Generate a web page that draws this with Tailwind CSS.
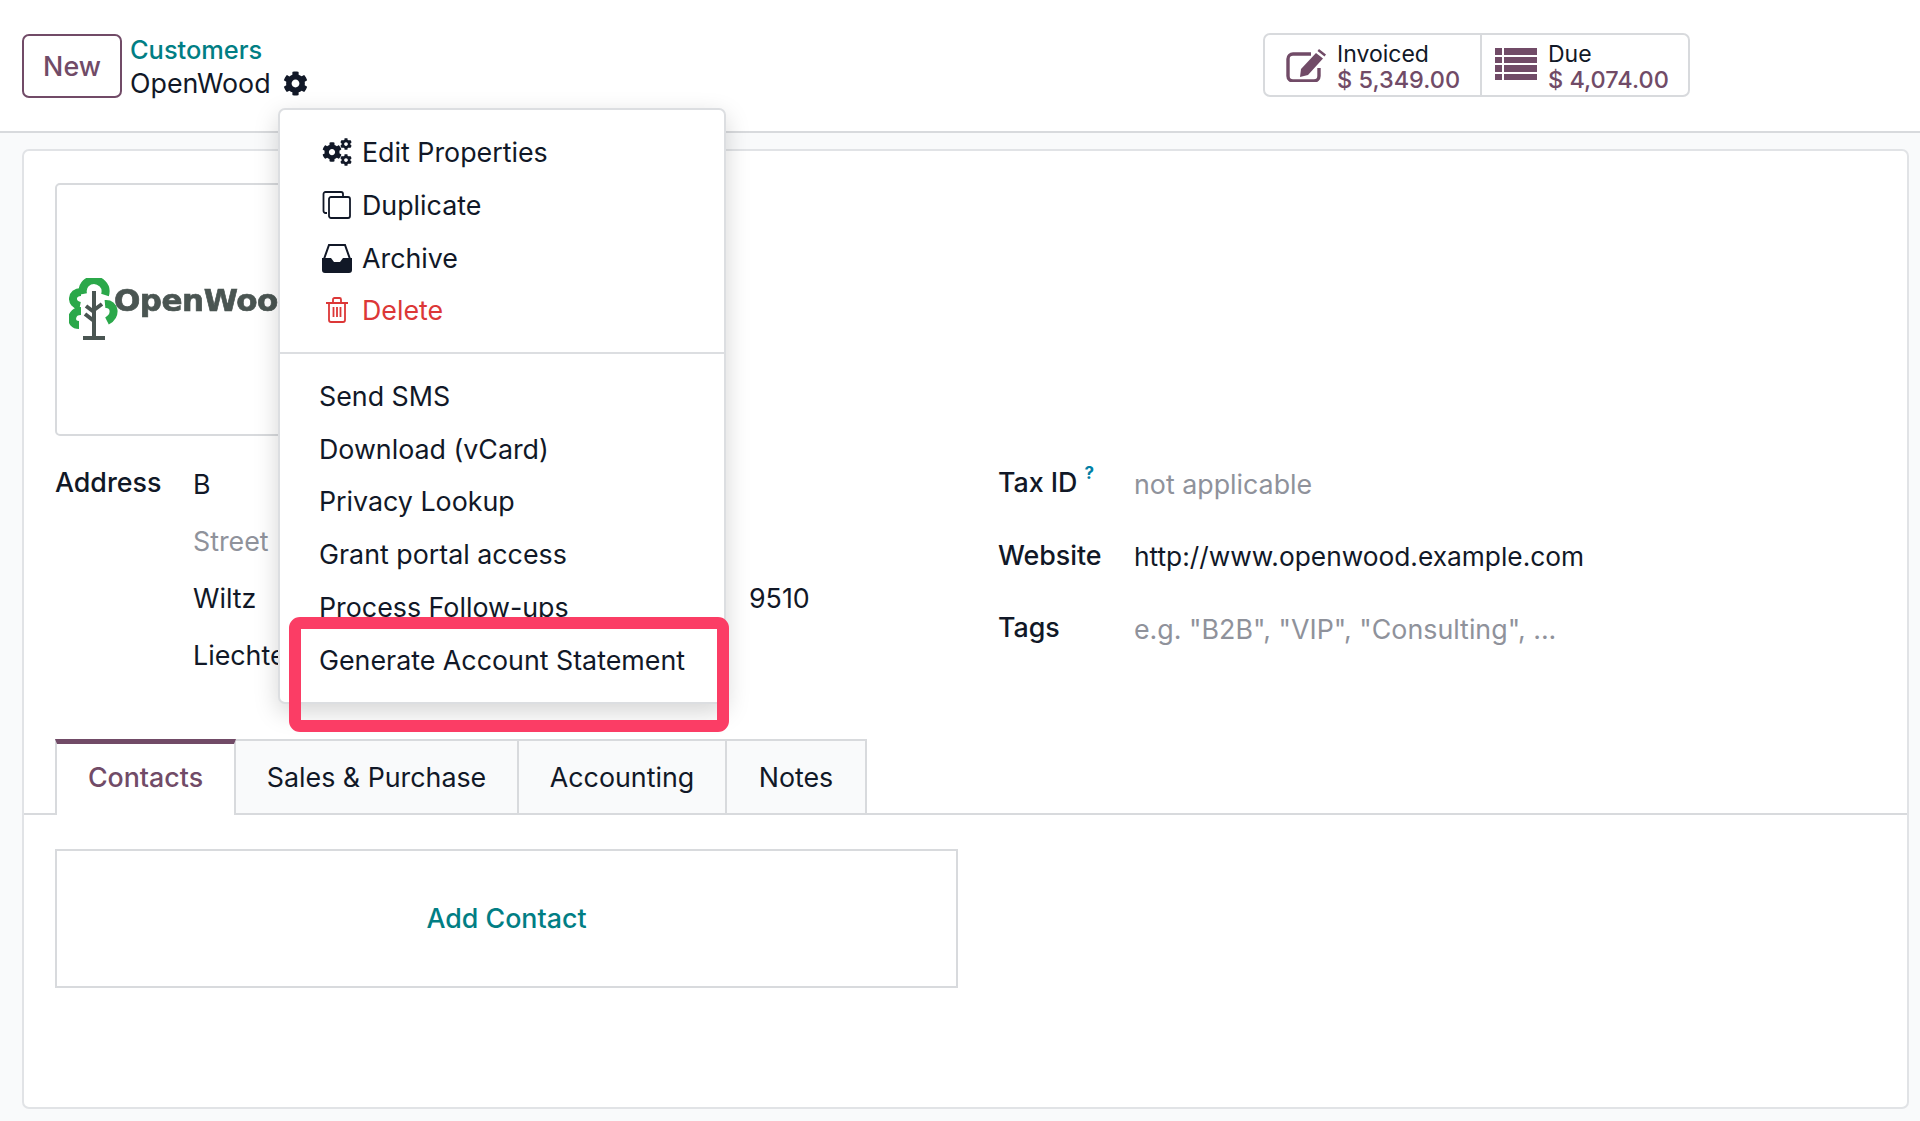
<!DOCTYPE html>
<html lang="en">
<head>
    <meta charset="UTF-8">
    <title>OpenWood</title>
    <script src="https://cdn.jsdelivr.net/npm/@tailwindcss/browser@4"></script>
</head>
<body class="bg-[#f9fafb] text-[#111827] font-['Inter','Liberation_Sans',sans-serif] text-[26.8px] leading-[36px]">
    <svg class="hidden">
        <symbol id="cog" viewBox="0 0 512 512"><path fill="currentColor" d="M487.4 315.7l-42.6-24.6c4.3-23.2 4.3-47 0-70.2l42.6-24.6c4.9-2.8 7.1-8.6 5.5-14-11.1-35.6-30-67.8-54.7-94.6-3.8-4.1-10-5.1-14.8-2.3L380.8 110c-17.9-15.4-38.5-27.3-60.8-35.1V25.8c0-5.6-3.9-10.5-9.4-11.7-36.7-8.2-74.3-7.8-109.2 0-5.5 1.2-9.4 6.1-9.4 11.7V75c-22.2 7.9-42.8 19.8-60.8 35.1L88.7 85.5c-4.9-2.8-11-1.9-14.8 2.3-24.7 26.7-43.6 58.9-54.7 94.6-1.7 5.4.6 11.2 5.5 14L67.3 221c-4.3 23.2-4.3 47 0 70.2l-42.6 24.6c-4.9 2.8-7.1 8.6-5.5 14 11.1 35.6 30 67.8 54.7 94.6 3.8 4.1 10 5.1 14.8 2.3l42.6-24.6c17.9 15.4 38.5 27.3 60.8 35.1v49.2c0 5.6 3.9 10.5 9.4 11.7 36.7 8.2 74.3 7.8 109.2 0 5.5-1.2 9.4-6.1 9.4-11.7v-49.2c22.2-7.9 42.8-19.8 60.8-35.1l42.6 24.6c4.9 2.8 11 1.9 14.8-2.3 24.7-26.7 43.6-58.9 54.7-94.6 1.5-5.5-.7-11.3-5.6-14.1zM256 336c-44.1 0-80-35.9-80-80s35.9-80 80-80 80 35.9 80 80-35.9 80-80 80z"/></symbol>
    </svg>

    <div class="relative w-[1920px] h-[1121px] overflow-hidden">
        <!-- control panel -->
        <header class="h-[133px] bg-white border-b-2 border-[#d8dadd] pt-[34px] pl-[22px] flex items-start">
            <button class="w-[100px] h-[64px] border-2 border-[#714b67] rounded-[7px] text-[#714b67] font-medium">New</button>
            <div class="w-[170px] ml-[8px] -mt-[1px]">
                <div class="text-[#017e84] font-medium h-[33px] leading-[34px] text-[25.4px]">Customers</div>
                <div class="flex items-center h-[34px]">
                    <span>OpenWood</span>
                    <svg class="w-[25px] h-[25px] ml-[12px] text-[#111827] shrink-0"><use href="#cog"/></svg>
                </div>
            </div>
            <div class="ml-[963px] flex h-[64px] -mt-px w-[427px] border-2 border-[#d8dadd] rounded-[7px] text-[23.500px] leading-[30px]">
                <div class="w-[217px] flex border-r-2 border-[#d8dadd] pl-[20px] pt-[7px]">
                    <svg class="w-[42px] h-[36px] mt-[4px] text-[#714b67]" viewBox="0 0 42 36" fill="none">
                        <path d="M26 8H8a5 5 0 0 0-5 5v17a5 5 0 0 0 5 5h21a5 5 0 0 0 5-5v-8" stroke="currentColor" stroke-width="3.4"/>
                        <path fill="currentColor" d="M34 3l7 5.5-1.5 2L32.500 5zM31 7l7 5.500L23 29l-8 2 1-8z"/>
                    </svg>
                    <div class="ml-[10px]">
                        <div class="leading-[24px] text-[23px]">Invoiced</div>
                        <div class="leading-[27px] text-[#714b67] font-medium">$ 5,349.00</div>
                    </div>
                </div>
                <div class="flex-1 flex pl-[13px] pt-[7px]">
                    <div class="w-[42px] mt-[6px] grid grid-cols-[7px_1fr] gap-x-[2px] gap-y-[2px] h-[32px]">
                        <i class="bg-[#714b67]"></i><i class="bg-[#714b67]"></i>
                        <i class="bg-[#714b67]"></i><i class="bg-[#714b67]"></i>
                        <i class="bg-[#714b67]"></i><i class="bg-[#714b67]"></i>
                        <i class="bg-[#714b67]"></i><i class="bg-[#714b67]"></i>
                    </div>
                    <div class="ml-[11px]">
                        <div class="leading-[24px] text-[23px]">Due</div>
                        <div class="leading-[27px] text-[#714b67] font-medium">$ 4,074.00</div>
                    </div>
                </div>
            </div>
        </header>

        <!-- form sheet -->
        <main class="mt-[16px] ml-[22px] w-[1887px] h-[960px] bg-white border-2 border-[#e1e3e6] rounded-[7px] pt-[32px]">
            <div class="ml-[31px] w-[260px] h-[253px] border-2 border-[#d8dadd] rounded-[5px] overflow-hidden flex items-start pt-[93px] pl-[12px]">
                <svg class="w-[50px] h-[64px] shrink-0" viewBox="0 0 50 64" fill="none">
                    <path d="M14 16C12 6 20 2 25 2s14 5 11 15" stroke="#2ba84a" stroke-width="8"/>
                    <path d="M12 14C2 14 1 26 11 28M36 26c10-1 12 12 2 17M12 33C1 33 0 47 10 47" stroke="#2ba84a" stroke-width="8"/>
                    <path d="M25 13v46M25 34l-8-6M25 43l-9-7M25 32l8-6M14 60h22" stroke="#4a5552" stroke-width="4"/>
                </svg>
                <span class="-ml-[5px] mt-[4px] font-['DejaVu_Sans'] font-bold text-[31px] tracking-[-0.5px] text-[#4a5552] blur-[0.6px] [-webkit-text-stroke:0.7px_#4a5552]">OpenWood</span>
            </div>

            <div class="ml-[31px] mt-[26px] h-[277px] flex">
                <div class="w-[943px] flex">
                    <div class="w-[138px] font-medium pt-[2px]">Address</div>
                    <div class="flex flex-col">
                        <div class="h-[56px] pt-[4px]">B</div>
                        <div class="h-[57px] pt-[5px] text-[#8f929b]">Street</div>
                        <div class="h-[57px] pt-[5px] flex"><span class="w-[556px]">Wiltz</span><span>9510</span></div>
                        <div class="pt-[5px]">Liechtenstein</div>
                    </div>
                </div>
                <div class="flex flex-col">
                    <div class="flex h-[72px]">
                        <div class="w-[136px] font-medium pt-[2px]">Tax ID <sup class="text-[#0180a5] text-[17px] font-bold -top-[13px]">?</sup></div>
                        <div class="pt-[4px] text-[#8f929b]">not applicable</div>
                    </div>
                    <div class="flex h-[72px]">
                        <div class="w-[136px] font-medium pt-[3px]">Website</div>
                        <div class="pt-[5px] text-[26.3px]">http://www.openwood.example.com</div>
                    </div>
                    <div class="flex">
                        <div class="w-[136px] font-medium pt-[3px]">Tags</div>
                        <div class="pt-[5px] text-[#8f929b]">e.g. "B2B", "VIP", "Consulting", ...</div>
                    </div>
                </div>
            </div>

            <div class="flex h-[76px] pl-[31px] border-b-2 border-[#d8dadd]">
                <div class="w-[181px] h-[76px] bg-white border-t-[5px] border-t-[#714b67] border-x-2 border-x-[#d8dadd] pb-[5px] flex items-center justify-center text-[#714b67] font-medium">Contacts</div>
                <div class="w-[283px] h-[74px] bg-[#f9fafb] border-t-2 border-r-2 border-[#d8dadd] flex items-center justify-center">Sales &amp; Purchase</div>
                <div class="w-[208px] h-[74px] bg-[#f9fafb] border-t-2 border-r-2 border-[#d8dadd] flex items-center justify-center">Accounting</div>
                <div class="w-[140px] h-[74px] bg-[#f9fafb] border-t-2 border-r-2 border-[#d8dadd] flex items-center justify-center">Notes</div>
            </div>

            <div class="ml-[31px] mt-[34px] w-[903px] h-[139px] border-2 border-[#d8dadd] pb-[2px] flex items-center justify-center text-[#017e84] font-medium">Add Contact</div>
        </main>

        <!-- action menu -->
        <div class="absolute left-[278px] top-[108px] w-[448px] h-[596px] bg-white border-2 border-[#dcdee1] rounded-[7px] shadow-[0_8px_24px_rgba(0,0,0,0.17)]">
            <div class="pt-[16px]">
                <div class="h-[52.700px] flex items-center pl-[42px]">
                    <svg class="w-[30px] h-[28px] text-[#111827]" viewBox="0 0 30 28">
                        <svg x="0" y="4" width="20" height="20"><use href="#cog"/></svg>
                        <svg x="18" y="0" width="12" height="12"><use href="#cog"/></svg>
                        <svg x="18" y="16" width="12" height="12"><use href="#cog"/></svg>
                    </svg>
                    <span class="ml-[10px]">Edit Properties</span>
                </div>
                <div class="h-[52.700px] flex items-center pl-[42px]">
                    <svg class="w-[30px] h-[30px] text-[#111827]" viewBox="0 0 30 30" fill="none" stroke="currentColor" stroke-width="1.8">
                        <path d="M5 23H3.500A2 2 0 0 1 1.500 21V4A2 2 0 0 1 3.500 2H19a2 2 0 0 1 2 2v2"/>
                        <rect x="7" y="7" width="21" height="21" rx="2"/>
                    </svg>
                    <span class="ml-[10px]">Duplicate</span>
                </div>
                <div class="h-[52.700px] flex items-center pl-[42px]">
                    <svg class="w-[30px] h-[30px] text-[#111827]" viewBox="0 0 30 30" fill="none">
                        <path d="M2 16L7 2h16l5 14" stroke="currentColor" stroke-width="2"/>
                        <path fill="currentColor" d="M0 15h9l3 4h6l3-4h9v12a3 3 0 0 1-3 3H3a3 3 0 0 1-3-3z"/>
                    </svg>
                    <span class="ml-[10px]">Archive</span>
                </div>
                <div class="h-[52.700px] flex items-center pl-[45px] text-[#dc3737]">
                    <svg class="w-[24px] h-[26px]" viewBox="0 0 24 26" fill="none" stroke="currentColor" stroke-width="1.800">
                        <path d="M1 6h22M8 6V2.500A1.500 1.500 0 0 1 9.500 1h5A1.500 1.500 0 0 1 16 2.500V6M4 6v17a2 2 0 0 0 2 2h12a2 2 0 0 0 2-2V6M8.500 10v10M12 10v10M15.500 10v10"/>
                    </svg>
                    <span class="ml-[13px]">Delete</span>
                </div>
            </div>
            <div class="mt-[15px] border-t-2 border-[#dcdee1] pt-[16px] pl-[39px]">
                <div class="h-[52.700px] flex items-center">Send SMS</div>
                <div class="h-[52.700px] flex items-center">Download (vCard)</div>
                <div class="h-[52.700px] flex items-center">Privacy Lookup</div>
                <div class="h-[52.700px] flex items-center">Grant portal access</div>
                <div class="h-[52.700px] flex items-center">Process Follow-ups</div>
                <div class="h-[52.700px] flex items-center">Generate Account Statement</div>
            </div>
        </div>

        <!-- highlight annotation -->
        <div class="absolute left-[289px] top-[617px] w-[440px] h-[115px] border-[12px] border-[#fb3d65] rounded-[11px]"></div>
    </div>
</body>
</html>
